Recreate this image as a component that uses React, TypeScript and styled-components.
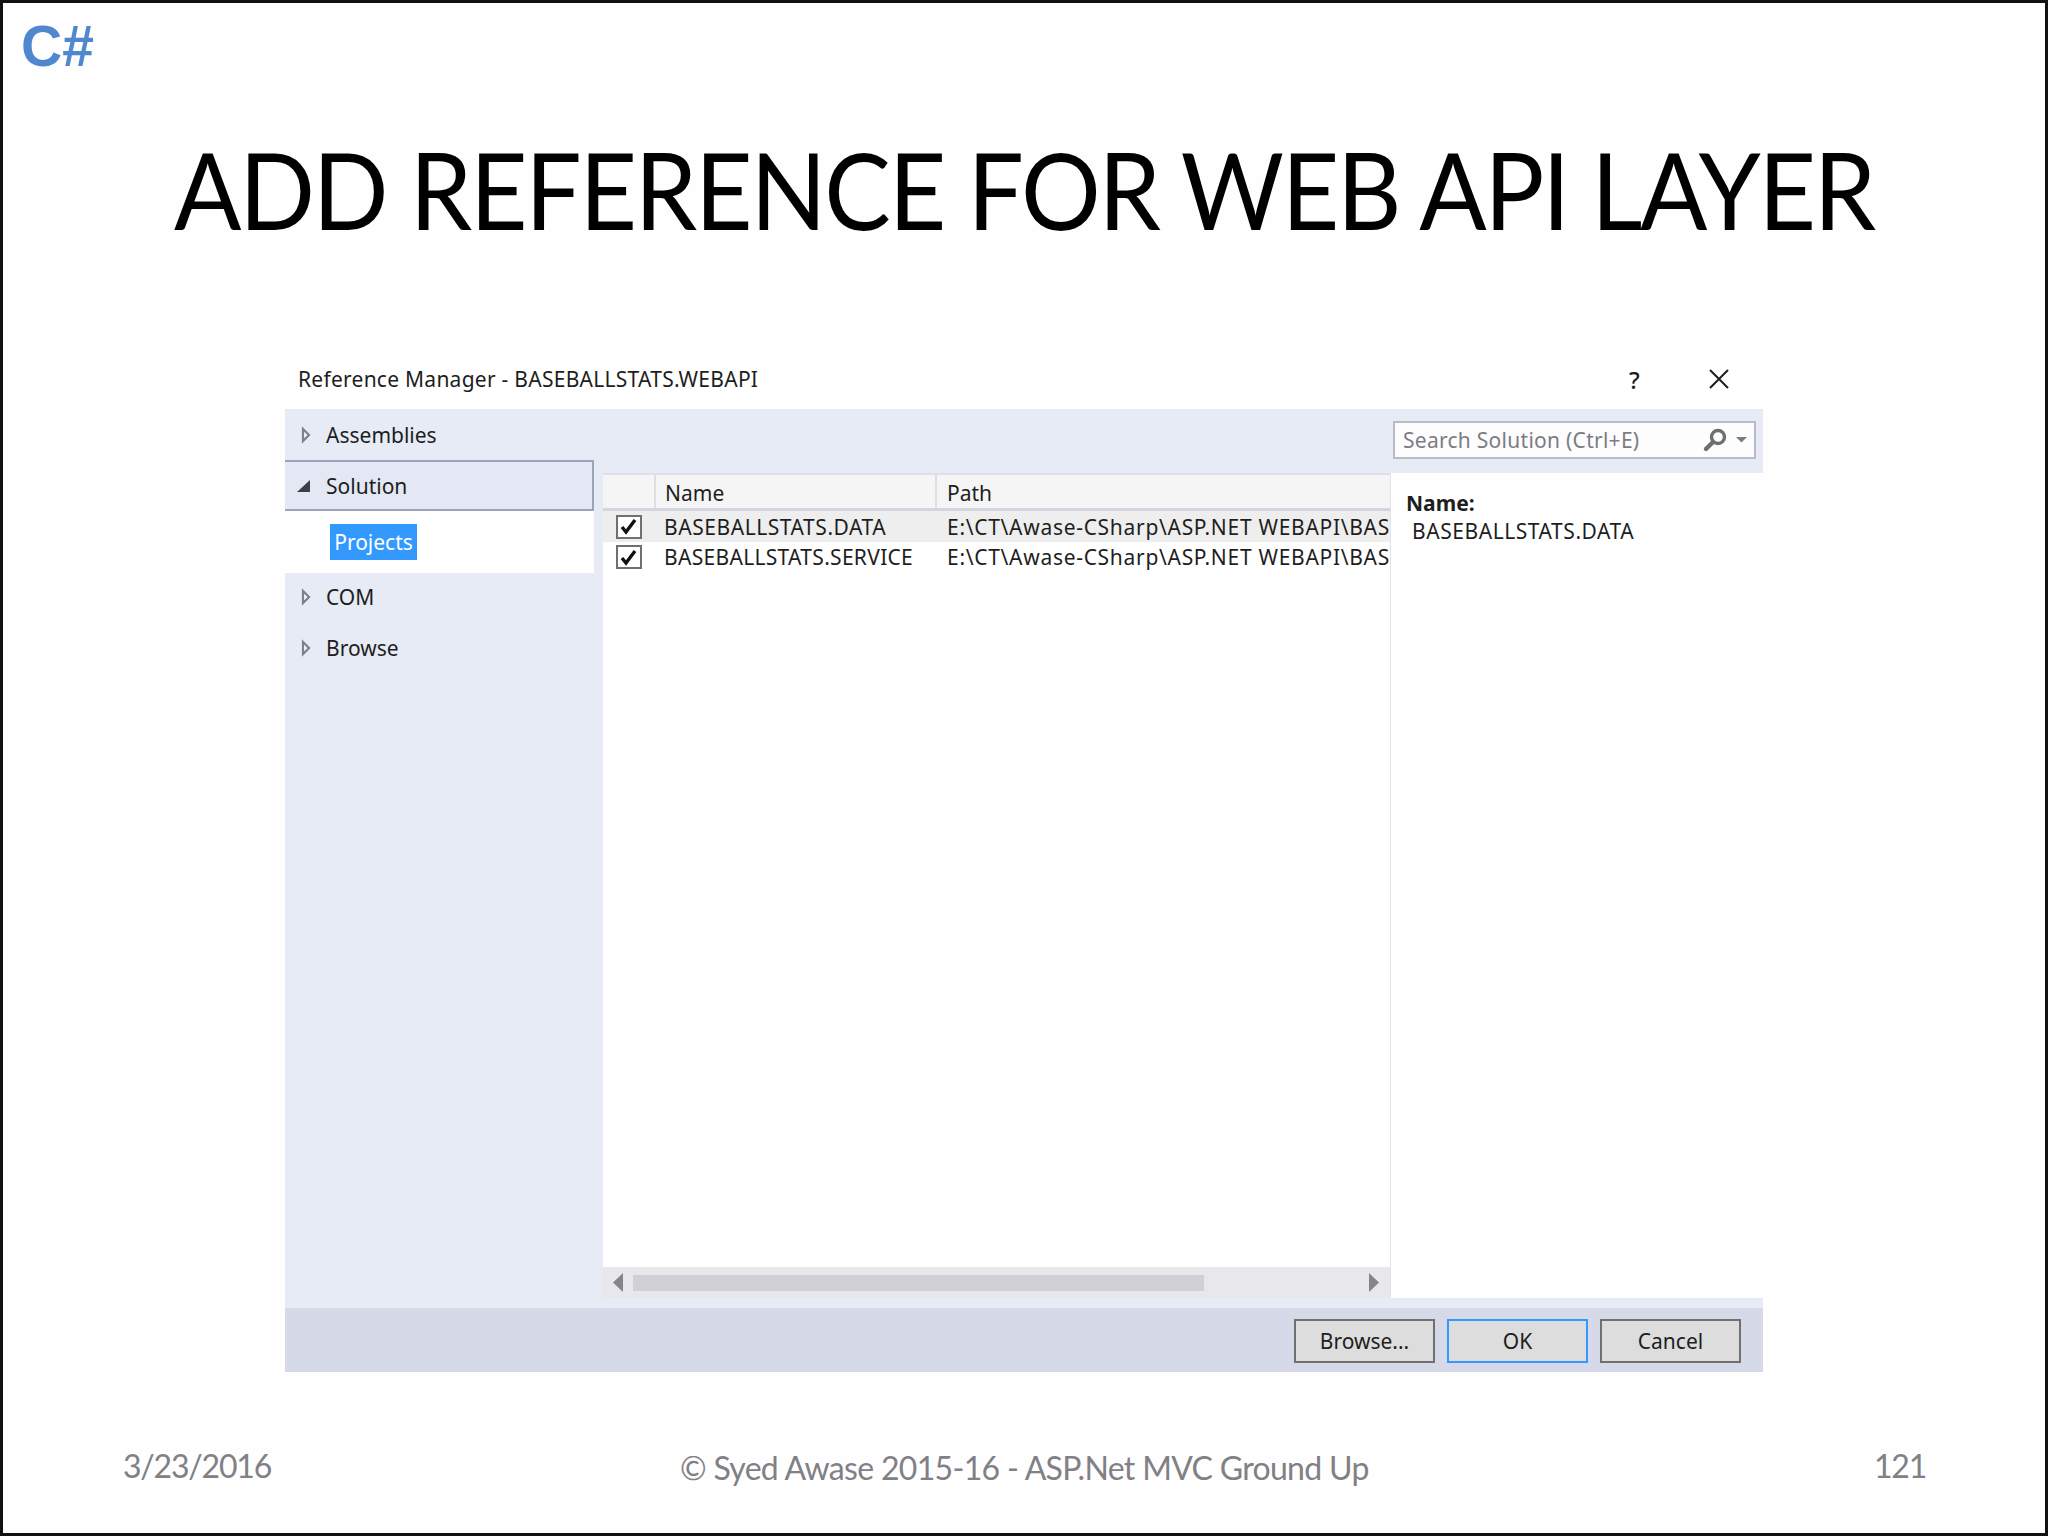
import React from "react";
import styled, { createGlobalStyle } from "styled-components";

const Global = createGlobalStyle`
  html, body { margin: 0; padding: 0; background: #fff; }
  * { box-sizing: border-box; }
`;

const UI = `"Noto Sans", "Open Sans", sans-serif`;
const SLIDE = `Lato, "Noto Sans", sans-serif`;

const Slide = styled.div`
  width: 2048px;
  height: 1536px;
  border: 3px solid #111;
  background: #fefefe;
  display: flex;
  flex-direction: column;
  overflow: hidden;
`;
const Logo = styled.div`
  font: bold 57px/66px "Liberation Sans", Arial, sans-serif;
  color: #4f88cf;
  padding: 10px 0 0 18px;
  height: 76px;
`;
const Title = styled.h1`
  margin: 45px 0 0;
  font: 400 107px/130px ${SLIDE};
  color: #000;
  text-align: center;
  letter-spacing: -2.4px;
  white-space: nowrap;
  height: 130px;
  transform: scaleX(0.932);
`;
const Dialog = styled.div`
  margin: 0 0 0 282px;
  width: 1478px;
  font-family: ${UI};
  color: #1e1e1e;
`;
const TitleBar = styled.div`
  height: 65px;
  margin-top: 90px;
  display: flex;
  align-items: center;
  padding: 5px 34px 0 13px;
  font-size: 21px;
  letter-spacing: 0.26px;
  background: #fff;
`;
const TitleText = styled.span`
  flex: 1;
`;
const Help = styled.span`
  font-size: 24px;
  margin-right: 69px;
  font-weight: 500;
`;
const Body = styled.div`
  height: 899px;
  background: #e6ebf5;
  display: flex;
`;
const Side = styled.div`
  width: 317px;
  flex: none;
  font-size: 21px;
`;
const NavRow = styled.div<{ $active?: boolean; $pull?: boolean }>`
  height: 51px;
  width: 309px;
  display: flex;
  align-items: center;
  padding-left: ${(p) => (p.$active ? 12 : 14)}px;
  gap: ${(p) => (p.$active ? 15 : 13)}px;
  margin-top: ${(p) => (p.$pull ? -2 : 0)}px;
  background: ${(p) => (p.$active ? "#e3e8f4" : "transparent")};
  border-top: ${(p) => (p.$active ? "2px solid #9aa5b8" : "none")};
  border-right: ${(p) => (p.$active ? "2px solid #9aa5b8" : "none")};
  border-bottom: ${(p) => (p.$active ? "2px solid #9aa5b8" : "none")};
`;
const Tree = styled.div`
  width: 309px;
  height: 62px;
  background: #fff;
  padding: 13px 0 0 45px;
`;
const Projects = styled.span`
  display: inline-flex;
  align-items: center;
  justify-content: center;
  width: 87px;
  height: 36px;
  background: #3399ff;
  color: #fff;
`;
const Main = styled.div`
  flex: 1;
  display: flex;
  flex-direction: column;
  min-width: 0;
`;
const TopBar = styled.div`
  height: 64px;
  display: flex;
  justify-content: flex-end;
  padding: 12px 7px 0 0;
`;
const SearchBox = styled.div`
  width: 363px;
  height: 38px;
  border: 2px solid #b6bcca;
  background: #fdfdfd;
  display: flex;
  align-items: center;
  padding: 0 6px 0 8px;
  font-size: 21px;
  letter-spacing: 0.27px;
  color: #7c7c83;
`;
const SearchText = styled.span`
  flex: 1;
`;
const Content = styled.div`
  flex: 1;
  display: flex;
  align-items: flex-start;
  min-height: 0;
`;
const ListPane = styled.div`
  width: 787px;
  margin-left: 1px;
  height: 825px;
  background: #fff;
  display: flex;
  flex-direction: column;
  font-size: 21px;
`;
const Header = styled.div`
  height: 38px;
  flex: none;
  display: grid;
  grid-template-columns: 53px 281px 1fr;
  background: #f5f5f5;
  border-top: 2px solid #dde0e8;
  border-bottom: 3px solid #d2d5dd;
`;
const HeaderCell = styled.div`
  display: flex;
  align-items: center;
  padding: 2px 0 0 9px;
  border-right: 2px solid #dcdee4;
  &:last-child {
    border-right: none;
    padding-left: 10px;
  }
`;
const Rows = styled.div`
  flex: 1;
`;
const Row = styled.div<{ $selected?: boolean }>`
  height: ${(p) => (p.$selected ? 31 : 30)}px;
  display: grid;
  grid-template-columns: 53px 281px 1fr;
  align-items: center;
  background: ${(p) => (p.$selected ? "#eeeeee" : "#fff")};
  white-space: nowrap;
`;
const CheckCell = styled.div`
  display: flex;
  justify-content: center;
  padding-right: 2px;
`;
const CheckBox = styled.span`
  width: 26px;
  height: 24px;
  border: 2px solid #707070;
  background: #fff;
  display: flex;
  align-items: center;
  justify-content: center;
`;
const NameCell = styled.div<{ $tracking: number }>`
  padding-left: 8px;
  letter-spacing: ${(p) => p.$tracking}px;
`;
const PathCell = styled.div`
  padding-left: 10px;
  white-space: nowrap;
  letter-spacing: 0.7px;
`;
const ScrollBar = styled.div`
  height: 31px;
  flex: none;
  background: #e8e8ec;
  display: flex;
  align-items: center;
  padding: 0 11px 0 10px;
`;
const ScrollTrack = styled.div`
  flex: 1;
  padding: 0 10px;
`;
const Thumb = styled.div`
  width: 571px;
  height: 16px;
  background: #d0d0d6;
`;
const Details = styled.div`
  flex: 1;
  height: 825px;
  background: #fff;
  border-left: 1px solid #e2e4ea;
  padding: 16px 0 0 15px;
  font-size: 21px;
  line-height: 28px;
`;
const DetailLabel = styled.div`
  font-weight: 700;
  font-size: 21px;
`;
const DetailValue = styled.div`
  padding-left: 6px;
  letter-spacing: 0.55px;
`;
const ButtonBar = styled.div`
  height: 64px;
  background: #d6d9e8;
  display: flex;
  justify-content: flex-end;
  gap: 12px;
  padding: 11px 22px 0 0;
`;
const Button = styled.div<{ $primary?: boolean }>`
  width: 141px;
  height: 44px;
  background: #dddddd;
  border: 2px solid ${(p) => (p.$primary ? "#3399ff" : "#707070")};
  display: flex;
  align-items: center;
  justify-content: center;
  font-size: 21px;
`;
const SlideFooter = styled.div`
  display: grid;
  grid-template-columns: 557px 1194px auto;
  padding: 0 0 0 120px;
  margin-top: 74px;
  font: 400 32px/40px ${SLIDE};
  color: #808085;
`;
const FooterSide = styled.span`
  letter-spacing: -1.2px;
`;
const FooterCenter = styled.span`
  margin-top: 2px;
  letter-spacing: -0.68px;
`;

const Collapsed = () => (
  <svg width="14" height="20" viewBox="0 0 14 20">
    <path d="M4 4 L10 10 L4 16 Z" fill="#f4f5f8" stroke="#808086" strokeWidth="2.2" />
  </svg>
);
const Expanded = () => (
  <svg width="14" height="20" viewBox="0 0 14 20">
    <path d="M13 4 V16 H0 Z" fill="#3c3f46" />
  </svg>
);
const Check = () => (
  <svg width="19" height="17" viewBox="0 0 19 17">
    <path d="M3 9 L7 14 L16 2" fill="none" stroke="#111" strokeWidth="3.4" />
  </svg>
);
const Magnifier = () => (
  <svg width="26" height="26" viewBox="0 0 26 26">
    <circle cx="16" cy="10" r="6.5" fill="none" stroke="#6f6f72" strokeWidth="3.4" />
    <path d="M11 15 L4 22" stroke="#6f6f72" strokeWidth="4.4" strokeLinecap="round" />
  </svg>
);
const Caret = () => (
  <svg width="12" height="6" viewBox="0 0 12 6" style={{ marginLeft: 8 }}>
    <path d="M0 0 H11 L5.5 5.5 Z" fill="#7b7b80" />
  </svg>
);
const CloseX = () => (
  <svg width="20" height="20" viewBox="0 0 20 20">
    <path d="M1 1 L19 19 M19 1 L1 19" stroke="#1e1e1e" strokeWidth="2" />
  </svg>
);
const Arrow = ({ dir }: { dir: "l" | "r" }) => (
  <svg width="10" height="19" viewBox="0 0 10 19">
    <path d={dir === "l" ? "M10 0 V19 L0 9.5 Z" : "M0 0 V19 L10 9.5 Z"} fill="#85858c" />
  </svg>
);

const PATH = "E:\\CT\\Awase-CSharp\\ASP.NET WEBAPI\\BAS";

export default function App() {
  return (
    <>
      <Global />
      <Slide>
        <Logo>C#</Logo>
        <Title>ADD REFERENCE FOR WEB API LAYER</Title>
        <Dialog>
          <TitleBar>
            <TitleText>Reference Manager - BASEBALLSTATS.WEBAPI</TitleText>
            <Help>?</Help>
            <CloseX />
          </TitleBar>
          <Body>
            <Side>
              <NavRow><Collapsed />Assemblies</NavRow>
              <NavRow $active><Expanded />Solution</NavRow>
              <Tree><Projects>Projects</Projects></Tree>
              <NavRow $pull><Collapsed />COM</NavRow>
              <NavRow><Collapsed />Browse</NavRow>
            </Side>
            <Main>
              <TopBar>
                <SearchBox>
                  <SearchText>Search Solution (Ctrl+E)</SearchText>
                  <Magnifier />
                  <Caret />
                </SearchBox>
              </TopBar>
              <Content>
                <ListPane>
                  <Header>
                    <HeaderCell />
                    <HeaderCell>Name</HeaderCell>
                    <HeaderCell>Path</HeaderCell>
                  </Header>
                  <Rows>
                    <Row $selected>
                      <CheckCell><CheckBox><Check /></CheckBox></CheckCell>
                      <NameCell $tracking={0.55}>BASEBALLSTATS.DATA</NameCell>
                      <PathCell>{PATH}</PathCell>
                    </Row>
                    <Row>
                      <CheckCell><CheckBox><Check /></CheckBox></CheckCell>
                      <NameCell $tracking={0.3}>BASEBALLSTATS.SERVICE</NameCell>
                      <PathCell>{PATH}</PathCell>
                    </Row>
                  </Rows>
                  <ScrollBar>
                    <Arrow dir="l" />
                    <ScrollTrack><Thumb /></ScrollTrack>
                    <Arrow dir="r" />
                  </ScrollBar>
                </ListPane>
                <Details>
                  <DetailLabel>Name:</DetailLabel>
                  <DetailValue>BASEBALLSTATS.DATA</DetailValue>
                </Details>
              </Content>
            </Main>
          </Body>
          <ButtonBar>
            <Button>Browse...</Button>
            <Button $primary>OK</Button>
            <Button>Cancel</Button>
          </ButtonBar>
        </Dialog>
        <SlideFooter>
          <FooterSide>3/23/2016</FooterSide>
          <FooterCenter>© Syed Awase 2015-16 - ASP.Net MVC Ground Up</FooterCenter>
          <FooterSide>121</FooterSide>
        </SlideFooter>
      </Slide>
    </>
  );
}
